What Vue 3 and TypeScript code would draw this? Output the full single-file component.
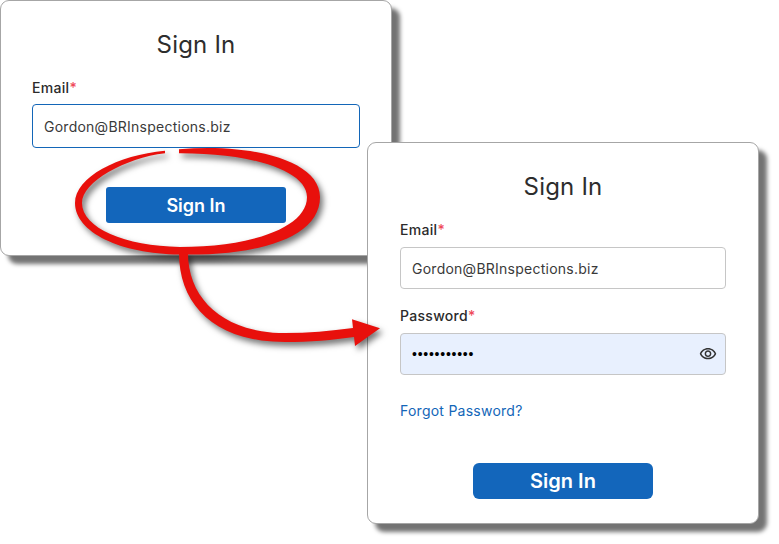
<template>
  <div class="canvas">
    <!-- first step: email only -->
    <section class="card card-email">
      <h1 class="title">Sign In</h1>
      <div class="field">
        <label class="label">Email<span class="req">*</span></label>
        <div class="input focused">{{ email }}</div>
      </div>
      <div class="actions">
        <button type="button" class="btn btn-square">Sign In</button>
      </div>
    </section>

    <!-- second step: email and password -->
    <section class="card card-password">
      <h1 class="title">Sign In</h1>
      <div class="field">
        <label class="label">Email<span class="req">*</span></label>
        <div class="input">{{ email }}</div>
      </div>
      <div class="field field-pass">
        <label class="label">Password<span class="req">*</span></label>
        <div class="input filled">
          <span class="dots">{{ dots }}</span>
          <svg class="eye" viewBox="0 0 24 24" width="18" height="18" aria-hidden="true">
            <path
              fill="#333"
              d="M12 6c3.790 0 7.170 2.130 8.820 5.500C19.170 14.870 15.790 17 12 17s-7.170-2.130-8.820-5.500C4.830 8.130 8.210 6 12 6m0-2C7 4 2.730 7.110 1 11.500 2.730 15.890 7 19 12 19s9.270-3.110 11-7.500C21.270 7.110 17 4 12 4zm0 5c1.380 0 2.500 1.120 2.500 2.500S13.380 14 12 14s-2.500-1.120-2.500-2.500S10.620 9 12 9m0-2c-2.480 0-4.500 2.020-4.500 4.500S9.520 16 12 16s4.500-2.020 4.500-4.500S14.480 7 12 7z"
            />
          </svg>
        </div>
      </div>
      <a class="forgot">Forgot Password?</a>
      <div class="actions actions-pass">
        <button type="button" class="btn btn-large">Sign In</button>
      </div>
    </section>

    <!-- hand drawn callout over both cards -->
    <svg class="callout" viewBox="0 0 779 544" width="779" height="544" aria-hidden="true">
      <g class="ink">
        <path
          d="M179 149.300C250 143 320 160 320 197C320 238 258 256 180 254.500C120 254 75 232 75 203C75 177 118 155 165 150.700L165 153.300C125 158 82 182 82 203C82 228 125 246 180 247C250 247 307 228 307 197C307 170 250 153 179 153.300Z"
          fill="#e8100c"
        />
        <path
          d="M179 253C179 305 215 342 285 342C310 342 333 340 354 337L355 346L380 328.300L352 319.300L353 328C330 331 308 333 285 333C225 333 188 300 188 253Z"
          fill="#e8100c"
        />
      </g>
    </svg>
  </div>
</template>

<script setup lang="ts">
const email = 'Gordon@BRInspections.biz'
const dots = '•••••••••••'
</script>

<style>
html,
body {
  margin: 0;
  background: #fff;
}
</style>

<style scoped>
.canvas {
  position: relative;
  width: 779px;
  height: 544px;
  overflow: hidden;
  background: #fff;
  font-family: "Inter", "Liberation Sans", sans-serif;
  color: #2b2b2b;
}

.card {
  position: absolute;
  box-sizing: border-box;
  background: #fff;
  border: 1px solid #a6a6a6;
  border-radius: 9px;
  box-shadow: 8px 8px 4px rgba(0, 0, 0, 0.55);
}

.card-email {
  left: 0;
  top: 0;
  width: 392px;
  height: 256px;
  padding: 28px 31px 0;
}

.card-password {
  left: 367px;
  top: 142px;
  width: 392px;
  height: 382px;
  padding: 28px 32px 0;
}

.title {
  margin: 0;
  height: 32px;
  line-height: 32px;
  font-size: 24px;
  font-weight: 400;
  text-align: center;
  letter-spacing: 0.2px;
  color: #2d2d2d;
}

.field {
  margin-top: 18px;
}

.field-pass {
  margin-top: 18px;
}

.label {
  display: block;
  height: 18px;
  line-height: 18px;
  font-size: 14px;
  font-weight: 500;
  letter-spacing: 0.3px;
  color: #2b2b2b;
}

.req {
  color: #ef4a5a;
}

.input {
  box-sizing: border-box;
  display: flex;
  align-items: center;
  justify-content: space-between;
  width: 326px;
  height: 42px;
  margin-top: 8px;
  padding: 0 8px 0 11px;
  border: 1px solid #c6c6c6;
  border-radius: 4px;
  font-size: 14px;
  letter-spacing: 0.25px;
  color: #3a3a3a;
}

.input.focused {
  width: 328px;
  height: 44px;
  margin-top: 7px;
  border-color: #1366b8;
}

.input.filled {
  background: #e8f0fe;
}

.dots {
  font-family: "Liberation Sans", sans-serif;
  font-size: 14px;
  letter-spacing: 0.75px;
  color: #000;
}

.forgot {
  display: block;
  margin-top: 26px;
  line-height: 20px;
  font-size: 14px;
  letter-spacing: 0.25px;
  color: #1366b8;
}

.actions {
  display: flex;
  justify-content: center;
  margin-top: 39px;
}

.actions-pass {
  margin-top: 42px;
}

.btn {
  width: 180px;
  height: 36px;
  padding: 0;
  border: none;
  border-radius: 6px;
  background: #1366bb;
  color: #fff;
  font-family: inherit;
  font-size: 18px;
  font-weight: 600;
}

.btn-large {
  font-size: 20px;
}

.btn-square {
  border-radius: 3px;
}

.callout {
  position: absolute;
  left: 0;
  top: 0;
  pointer-events: none;
}

.ink {
  filter: drop-shadow(3px 4px 3px rgba(0, 0, 0, 0.55));
}
</style>
